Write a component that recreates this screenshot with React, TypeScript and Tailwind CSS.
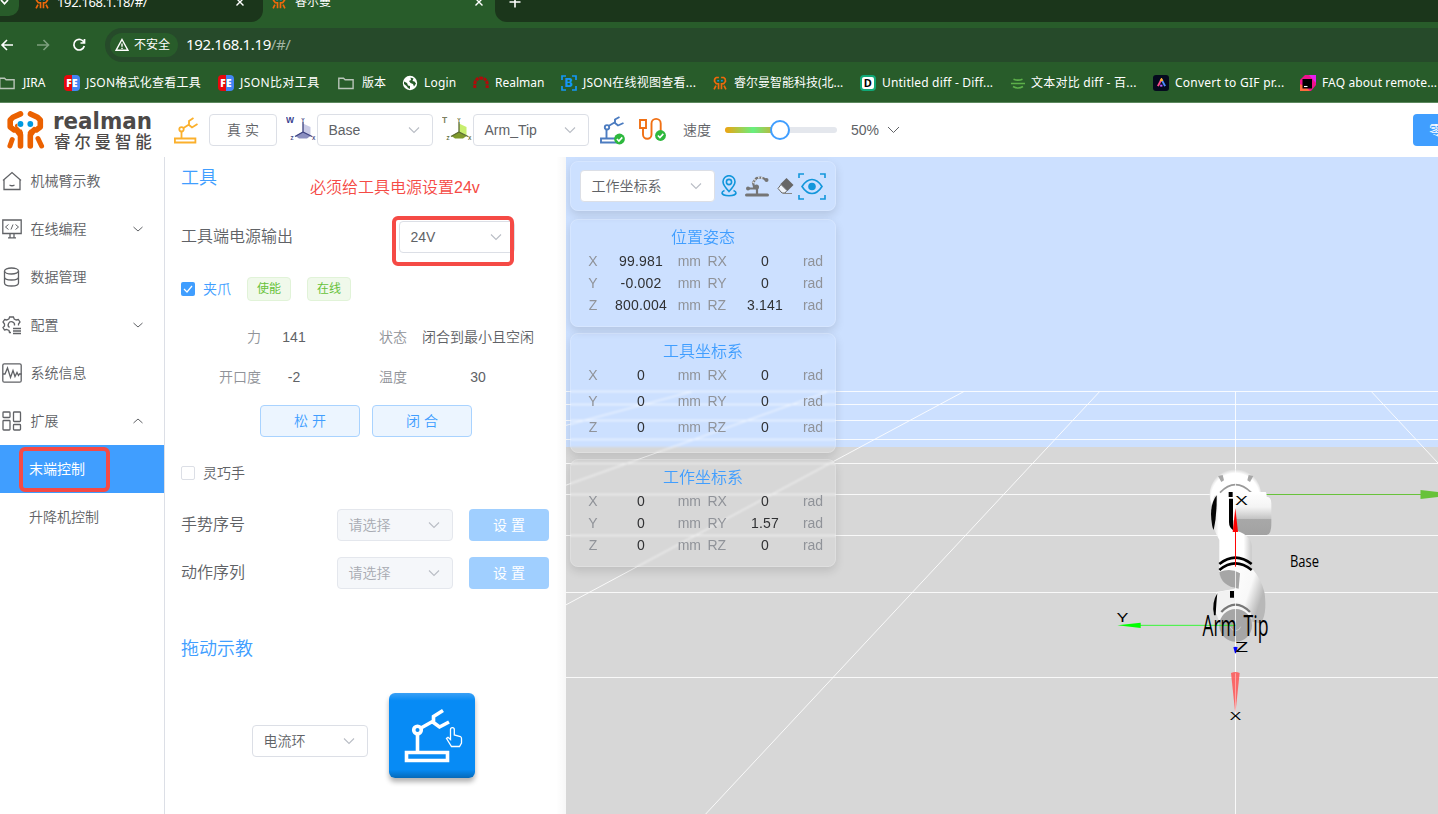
import type { ReactNode } from 'react';

function Chevron({ up = false, className = 'text-[#b9bdc5]' }: { up?: boolean; className?: string }) {
  return (
    <svg className={`h-3 w-3 shrink-0 ${className}`} viewBox="0 0 12 12" fill="none" stroke="currentColor" strokeWidth="1.100">
      <path d={up ? 'M1 8.5 6 4l5 4.5' : 'M1 3.5 6 8.5l5-5'} />
    </svg>
  );
}

function Select({ value, className = 'w-[116px]', disabled = false }: { value: string; className?: string; disabled?: boolean }) {
  return (
    <div
      className={`flex h-8 shrink-0 items-center justify-between rounded border pr-3 pl-[10.5px] text-sm ${
        disabled ? 'border-[#e4e7ed] bg-[#f5f7fa] text-[#a8abb2]' : 'border-[#dcdfe6] bg-white text-[#606266]'
      } ${className}`}
    >
      <span>{value}</span>
      <Chevron />
    </div>
  );
}

/* ---------- logo and toolbar drawings ---------- */

function MiniMark({ className = '' }: { className?: string }) {
  return (
    <svg className={`h-[14px] w-[14px] shrink-0 ${className}`} viewBox="0 0 38 38" fill="none" stroke="#f0690c" strokeWidth="4.500">
      <path d="M16 4H9Q4 6 4 14l5 7h6v15M22 4h7Q34 6 34 14l-5 7h-6v15M3 36l5-10M35 36l-5-10" />
      <path d="M11.500 13h5M21.500 13h5" stroke="#1296db" />
    </svg>
  );
}

function LogoMark() {
  return (
    <svg className="h-[38px] w-[38px] shrink-0" viewBox="0 0 38 38" fill="none" stroke="#eb6100" strokeWidth="5.600" strokeLinecap="round" strokeLinejoin="round">
      <path d="M13.500 2.900 6 6.300 3.200 9v7l4 3h2.500L13.500 24v11" />
      <path d="M23.500 2.900 30.500 6.300 33.300 9v7l-4 3h-2.500L23.300 24v11" />
      <path d="M13.500 22 10.500 15M23.300 22l3-4M5.200 28.500 2.900 35M31 27.500 34.600 35" strokeWidth="5" />
      <path d="M13.500 7.500h10l4 3v4.500l-4 3.500h-10l-3-3v-5z" fill="#fff" stroke="none" />
      <circle cx="13.500" cy="13" r="2.900" fill="#0099e0" stroke="none" />
      <circle cx="23.300" cy="13" r="2.900" fill="#0099e0" stroke="none" />
    </svg>
  );
}

function ArmIcon({ color, className }: { color: string; className: string }) {
  return (
    <svg className={className} viewBox="0 0 24 27" fill="none" stroke={color} strokeWidth="1.800">
      <path d="M.9 21.500h20.500v4H.9zM7.500 21V14M9.500 11l5.500-3.500M19.500 1 15 4v4l3 2.500L23.500 7" />
      <circle cx="7.500" cy="12.300" r="2.200" />
    </svg>
  );
}

function FrameIcon({ letter, dark, light, mid, tag }: { letter: string; dark: string; light: string; mid: string; tag: string }) {
  return (
    <svg className="h-[26px] w-[31px] shrink-0" viewBox="0 0 31 26">
      <text x="0" y="6.500" fontSize="8.500" fontWeight="700" fill={tag} fontFamily="Liberation Sans">{letter}</text>
      <path d="M17 7.500 24.500 11v9L17 16z" fill={light} />
      <path d="M17 15.500l7.500 4.500-3.500 2.500h-8L9.500 20z" fill={mid} />
      <path d="M17 6v10.500M17 16 9 20.500M17 16l9 4.500" stroke={dark} strokeWidth="1.300" fill="none" />
      <text x="15.200" y="5.500" fontSize="5" fontWeight="700" fill={dark} fontFamily="Liberation Sans">Y</text>
      <text x="4.500" y="23.500" fontSize="5" fontWeight="700" fill={dark} fontFamily="Liberation Sans">Z</text>
      <text x="26" y="23.500" fontSize="5" fontWeight="700" fill={dark} fontFamily="Liberation Sans">X</text>
    </svg>
  );
}

function OkBadge() {
  return (
    <>
      <circle r="5.400" fill="#2db83d" />
      <path d="m-2.600 0 2 2 3.400-3.600" fill="none" stroke="#fff" strokeWidth="1.600" />
    </>
  );
}

function ArmReady() {
  return (
    <svg className="h-[29px] w-[26px] shrink-0" viewBox="0 0 26 29">
      <g fill="none" stroke="#4c7cc0" strokeWidth="1.900">
        <path d="M1 22.500h16v4H1zM3.500 22.500h8M6.500 22v-8.500M8.500 10l6-3.500M19.500 1 15 3.500v3.500l3 2.500 5.500-2.500" />
        <circle cx="7" cy="11.300" r="2.200" />
      </g>
      <g transform="translate(19.500 23)"><OkBadge /></g>
    </svg>
  );
}

function CableReady() {
  return (
    <svg className="h-[26px] w-[30px] shrink-0" viewBox="0 0 30 26">
      <g fill="none" stroke="#f07014" strokeWidth="1.900">
        <path d="M2 3h6v8H2zM5 11v6.500a4.200 4.200 0 0 0 8.500 0V6.500a4.600 4.600 0 0 1 9.200 0V14" />
      </g>
      <g transform="translate(22.500 18.500)"><OkBadge /></g>
    </svg>
  );
}

/* ---------- browser chrome ---------- */

function FolderIcon() {
  return (
    <svg className="h-4 w-4" viewBox="0 0 16 16" fill="none" stroke="#b9c5b9" strokeWidth="1.400">
      <path d="M.8 13.500V3.200h4.700l1.600 1.600h8v8.700z" />
    </svg>
  );
}

function FeIcon() {
  return (
    <span className="flex h-4 w-4 items-center justify-center rounded-sm bg-[linear-gradient(90deg,#e8080c_50%,#4285f4_50%)] text-[10px] leading-none font-black text-white">
      FE
    </span>
  );
}

const bookmarks: { label: string; box: string; icon: ReactNode }[] = [
  { label: 'JIRA', box: 'w-[65px] gap-2', icon: <FolderIcon /> },
  { label: 'JSON格式化查看工具', box: 'w-[154px] gap-1.5 tracking-[0.25px]', icon: <FeIcon /> },
  { label: 'JSON比对工具', box: 'w-[120px] gap-1.5 tracking-[0.4px]', icon: <FeIcon /> },
  { label: '版本', box: 'w-[64px] gap-2', icon: <FolderIcon /> },
  {
    label: 'Login', box: 'w-[71px] gap-1.5 tracking-[0.2px]',
    icon: (
      <svg className="h-4 w-4" viewBox="0 0 16 16">
        <circle cx="8" cy="8" r="7.200" fill="#fff" />
        <path d="M2 6.500 5 8l1 2.500 2 .5v3l-2-1-1.500-2L2 9zM8.500 2.500l3 1-1 2.500 2 .5 1.500 2-2 3-1-2.500-2.500-1-1.500-2L9 5z" fill="#285c2a" />
      </svg>
    ),
  },
  {
    label: 'Realman', box: 'w-[88px] gap-1.5',
    icon: (
      <svg className="h-4 w-4" viewBox="0 0 16 16">
        <path d="M1.800 13V9Q2 3.500 8 3q6 .5 6.200 6V13" fill="none" stroke="#b00a0a" strokeWidth="3" strokeDasharray="3.200 .8" />
      </svg>
    ),
  },
  {
    label: 'JSON在线视图查看...', box: 'w-[151px] gap-1.5 tracking-[0.25px]',
    icon: (
      <svg className="h-4 w-4" viewBox="0 0 16 16" fill="none" stroke="#1497f5" strokeWidth="1.700">
        <path d="M1 5V1h4M11 1h4v4M15 11v4h-4M5 15H1v-4" />
        <text x="4" y="12.300" fontSize="12" fontWeight="800" fill="#1497f5" stroke="none" fontFamily="Inter">B</text>
      </svg>
    ),
  },
  { label: '睿尔曼智能科技(北...', box: 'w-[148px] gap-1.5', icon: <MiniMark className="ml-px h-[13px] w-[13px]" /> },
  {
    label: 'Untitled diff - Diff...', box: 'w-[150px] gap-1.5 tracking-[0.2px]',
    icon: (
      <span className="flex h-4 w-4 items-center justify-center rounded-sm border-2 border-[#10a877] bg-white text-[11px] leading-none font-bold text-black">
        D
      </span>
    ),
  },
  {
    label: '文本对比 diff - 百...', box: 'w-[143px] gap-[5px] tracking-[0.25px]',
    icon: (
      <svg className="h-4 w-4" viewBox="0 0 16 16" fill="none" stroke="#5db04a" strokeWidth="1.700">
        <path d="M3.500 4.200q4.500 2 9 0M1 8.500h14M3 11.500q5 3 10 0" />
      </svg>
    ),
  },
  {
    label: 'Convert to GIF pr...', box: 'w-[147px] gap-1.5 tracking-[0.25px]',
    icon: (
      <span className="flex h-4 w-4 items-center justify-center rounded-[3px] bg-[#050a1e]">
        <svg className="h-[9px] w-[9px]" viewBox="0 0 10 10" fill="none" strokeWidth="2.200">
          <path d="M1 9 5 1.500" stroke="#ff4d8d" />
          <path d="M5 1.500 9 9" stroke="#4c8dff" />
          <path d="M4 3.500 5 1.500l1 2" stroke="#ffb02e" />
          <path d="M3.500 8.500h2.500" stroke="#b35cff" />
        </svg>
      </span>
    ),
  },
  {
    label: 'FAQ about remote...', box: 'w-[140px] gap-1.5 tracking-[0.12px]',
    icon: (
      <svg className="h-4 w-4" viewBox="0 0 16 16">
        <path d="M5 0h11v10l-5 6H0V5z" fill="#f0128c" />
        <path d="M0 9v7h10l-4-4z" fill="#ff6a3d" />
        <path d="M9 0h7v8z" fill="#e61ef0" />
        <path d="M2.500 4H12v9.500H2.500z" />
        <path d="M4 11.500h3.500" stroke="#fff" strokeWidth="1.100" />
      </svg>
    ),
  },
];

function BrowserChrome() {
  return (
    <header className="h-[103px] shrink-0 border-b border-[#5c885e] bg-[#285c2a] font-['Noto_Sans','Noto_Sans_CJK_SC',sans-serif] font-normal text-white">
      <div className="flex h-[22px] overflow-hidden bg-[#285c2a]">
        <div className="flex w-[263px] shrink-0 rounded-br-xl bg-[#1b361b]">
          <div className="h-4 w-[19px] rounded-br-[10px] bg-[#285c2a]">
            <svg className="h-3 w-3" viewBox="0 0 12 12" fill="none" stroke="#fff" strokeWidth="1.700"><path d="m1 0 3.500 3.800L8 0" /></svg>
          </div>
          <MiniMark className="-mt-[5px] ml-[16px]" />
          <span className="-mt-[9px] ml-[8px] w-[178px] text-[13px] leading-[22px] tracking-[-0.35px]">192.168.1.18/#/</span>
          <svg className="h-3 w-2.5" viewBox="0 0 10 12" stroke="#fff" strokeWidth="1.400"><path d="M1.500-1.500 8.500 5.500M8.500-1.500 1.500 5.500" /></svg>
        </div>
        <div className="flex w-[232px] shrink-0">
          <MiniMark className="-mt-[5px] ml-[9px]" />
          <span className="-mt-[9px] ml-[9px] w-[179px] text-[12px] leading-[22px]">睿尔曼</span>
          <svg className="h-3 w-2.5" viewBox="0 0 10 12" stroke="#fff" strokeWidth="1.400"><path d="M1.500-1.500 8.500 5.500M8.500-1.500 1.500 5.500" /></svg>
        </div>
        <div className="flex-1 rounded-bl-xl bg-[#1b361b] pl-[14px]">
          <svg className="-mt-1 h-3 w-3" viewBox="0 0 12 12" stroke="#fff" strokeWidth="1.600"><path d="M.5 6h11M6 .5v11" /></svg>
        </div>
      </div>
      <div className="flex h-[46px] items-center">
        <svg className="h-4 w-4 shrink-0" viewBox="0 0 16 16" fill="none" stroke="#fff" strokeWidth="1.600"><path d="M13 8H2M7 3 2 8l5 5" /></svg>
        <svg className="ml-5 h-4 w-4 shrink-0" viewBox="0 0 16 16" fill="none" stroke="#7d9f7e" strokeWidth="1.600"><path d="M1 8h11M7.500 3l5 5-5 5" /></svg>
        <svg className="ml-[19px] h-4 w-4 shrink-0" viewBox="0 0 16 16" fill="none" stroke="#fff" strokeWidth="1.700">
          <path d="M13 5.500A5.300 5.300 0 1 0 13.300 9M13.500 2v4h-4" />
        </svg>
        <div className="ml-[18px] flex h-[34px] flex-1 items-center rounded-l-[17px] bg-[#264a2a] pl-[5px]">
          <div className="flex h-6 w-[68px] items-center rounded-full bg-[#285c2a] pl-[5px]">
            <svg className="h-[14px] w-[14px]" viewBox="0 0 14 14" fill="none" stroke="#fff" strokeWidth="1.400"><path d="M7 1.500 13 12.300H1zM7 5.500v3.300M7 9.800v1.200" /></svg>
            <span className="ml-[5px] text-[12px] leading-none whitespace-nowrap">不安全</span>
          </div>
          <span className="-mt-0.5 ml-2 text-[15px] tracking-[-0.37px]">192.168.1.19<span className="text-[#a3b5a4]">/#/</span></span>
        </div>
      </div>
      <nav className="-ml-px flex h-[29px] items-center text-[12px] whitespace-nowrap">
        {bookmarks.map((b) => (
          <div key={b.label} className={`flex shrink-0 items-center ${b.box}`}>
            <span className="flex h-4 w-4 shrink-0 items-center">{b.icon}</span>
            <span>{b.label}</span>
          </div>
        ))}
      </nav>
    </header>
  );
}

/* ---------- app header ---------- */

function AppHeader() {
  return (
    <div className="flex h-[54px] shrink-0 items-center overflow-hidden bg-white pl-[7px]">
      <LogoMark />
      <svg className="ml-[9px] h-[42px] w-[99px] shrink-0" viewBox="0 0 99 42" fill="#4c4948" fontWeight="700">
        <text x="-1" y="19.500" fontSize="22.500" textLength="99" lengthAdjust="spacingAndGlyphs" fontFamily="DejaVu Sans">realman</text>
        <text x="0" y="39" fontSize="16.500" fontWeight="500" letterSpacing="3.800" fontFamily="Noto Sans CJK SC">睿尔曼智能</text>
      </svg>
      <ArmIcon color="#fbb02c" className="ml-[21px] h-[27px] w-6 shrink-0" />
      <div className="ml-[11px] flex h-8 w-[68px] shrink-0 items-center justify-center rounded border border-[#dcdfe6] text-sm">真 实</div>
      <div className="-mt-0.5 ml-[9px] flex items-center"><FrameIcon letter="W" dark="#3d4380" light="#c9cbe6" mid="#8b8fc0" tag="#3b3f8f" /></div>
      <Select value="Base" />
      <div className="-mt-0.5 ml-[9px] flex items-center"><FrameIcon letter="T" dark="#5c6b35" light="#c8ee6e" mid="#7f9a2a" tag="#7d8060" /></div>
      <Select value="Arm_Tip" />
      <div className="ml-[11px]"><ArmReady /></div>
      <div className="ml-[12px]"><CableReady /></div>
      <span className="ml-[15px] text-sm">速度</span>
      <div className="relative ml-[14px] h-1.5 w-[112px] shrink-0 rounded-full bg-[#e4e7ed]">
        <div className="h-1.5 w-[56px] rounded-full bg-[linear-gradient(90deg,#f0a30f,#67ef80_50%,#e0a020)]" />
        <div className="absolute -top-[7px] left-[45px] h-5 w-5 rounded-full border-2 border-[#409eff] bg-white" />
      </div>
      <span className="ml-[14px] text-sm">50%</span>
      <svg className="ml-2 h-3 w-[13px]" viewBox="0 0 13 12" fill="none" stroke="#606266"><path d="m1 3 5.500 5.500L12 3" /></svg>
      <div className="ml-auto flex h-8 w-[25px] shrink-0 items-center overflow-hidden rounded-l bg-[#409eff] pl-4 text-sm whitespace-nowrap text-white">零位</div>
    </div>
  );
}

/* ---------- sidebar ---------- */

const menu: { label: string; icon: ReactNode; arrow?: 'up' | 'down' }[] = [
  { label: '机械臂示教', icon: <path d="M1 9.500 10 1.500l9 8M2 8.800V18.500h16V8.800M7.500 14q2.500 1.500 5 0" /> },
  {
    label: '在线编程', arrow: 'down',
    icon: <><path d="M.8 1h18.400v13.500H.8zM8 14.500v4M12 14.500v4M6 18.800h8" /><path d="M6.500 5.500 3.500 8l3 2.500M13.500 5.500l3 2.500-3 2.500M11 5.500l-2 5" strokeWidth="1" /></>,
  },
  { label: '数据管理', icon: <><ellipse cx="9.500" cy="4" rx="7" ry="3" /><path d="M2.500 4v12c0 4 14 4 14 0V4M2.500 10c0 4 14 4 14 0" /></> },
  {
    label: '配置', arrow: 'down',
    icon: (
      <>
        <path d="M9 17.500H7.500L7 15.500 4.500 14.500l-2 .5L1 12.500l1.500-1.500v-2L1 7l1.700-2.500 2 .5L7 3.800 7.600 2h3.800l.8 2 2 1 2.100-.5L18 7l-1.500 2v1.500" />
        <path d="M12.500 10.500a3.200 3.200 0 1 0-5 2M11 13.500h8M11 16h8M11 18.500h8" />
      </>
    ),
  },
  { label: '系统信息', icon: <><rect x=".8" y=".8" width="18.400" height="18.400" rx="1.500" /><path d="M1 11h2l2.500-6 3 9.500 2.500-7 2 6 2-4 1.500 3 1-1.500h2" /></> },
  {
    label: '扩展', arrow: 'up',
    icon: <><rect x="1" y="1" width="7" height="5.500" rx=".8" /><rect x="1" y="9.500" width="7" height="9.500" rx=".8" /><rect x="11.500" y="1" width="7" height="9.500" rx=".8" /><rect x="11.500" y="13.500" width="7" height="5.500" rx=".8" /></>,
  },
];

function Sidebar() {
  return (
    <aside className="w-[165px] shrink-0 border-r border-[#dcdfe6] bg-white text-sm">
      {menu.map((m) => (
        <div key={m.label} className="flex h-12 items-center pl-0.5">
          <svg className="h-5 w-5 shrink-0" viewBox="0 0 20 20" fill="none" stroke="#606266" strokeWidth="1.300">{m.icon}</svg>
          <span className="ml-[8.5px] flex-1">{m.label}</span>
          {m.arrow && (
            <svg className="mr-[20px] h-3 w-3" viewBox="0 0 12 12" fill="none" stroke="#606266">
              <path d={m.arrow === 'up' ? 'M1.500 8 6 4l4.500 4' : 'm1.500 4 4.500 4 4.500-4'} />
            </svg>
          )}
        </div>
      ))}
      <div className="relative flex h-12 items-center bg-[#409eff] pl-[29px] font-normal text-white">
        末端控制
        <div className="absolute top-[2px] left-[19px] h-[45px] w-[91px] rounded-md border-4 border-[#f54a45]" />
      </div>
      <div className="flex h-12 items-center pl-[29px]">升降机控制</div>
    </aside>
  );
}

/* ---------- tool panel ---------- */

function Tag({ children }: { children: ReactNode }) {
  return <span className="flex h-6 w-11 items-center justify-center rounded border border-[#e1f3d8] bg-[#f0f9eb] text-xs font-normal text-[#67c23a]">{children}</span>;
}

function DisabledRow({ label }: { label: string }) {
  return (
    <div className="flex h-8 items-center">
      <span className="w-[156px] text-base">{label}</span>
      <Select value="请选择" disabled />
      <div className="ml-4 flex h-8 w-20 items-center justify-center rounded bg-[#a0cfff] text-sm font-normal text-white">设 置</div>
    </div>
  );
}

function ToolPanel() {
  return (
    <section className="flex w-[401px] shrink-0 flex-col bg-white bg-[linear-gradient(90deg,transparent_97.5%,rgba(0,0,0,0.03))] pl-4">
      <div className="flex h-[63px] items-start">
        <h2 className="mt-2 text-lg leading-[26px] text-[#409eff]">工具</h2>
        <p className="mt-[19px] ml-[93px] text-base leading-6 text-[#f54a45]">必须给工具电源设置24v</p>
      </div>
      <div className="relative mt-px flex h-8 items-center">
        <span className="w-[218px] text-base">工具端电源输出</span>
        <Select value="24V" />
        <div className="absolute -top-[5px] left-[211px] h-[50px] w-[122px] rounded-md border-4 border-[#f54a45]" />
      </div>
      <div className="mt-6 flex h-6 items-center text-sm">
        <span className="flex h-3.5 w-3.5 items-center justify-center rounded-[2px] bg-[#409eff]">
          <svg className="h-2.5 w-2.5" viewBox="0 0 10 10" fill="none" stroke="#fff" strokeWidth="1.200"><path d="m1 5 3 3 5-6" /></svg>
        </span>
        <span className="mr-4 ml-2 text-[#409eff]">夹爪</span>
        <Tag>使能</Tag>
        <span className="w-4" />
        <Tag>在线</Tag>
      </div>
      <div className="mt-4 grid w-[370px] grid-cols-[80px_66px_80px_142px] text-sm leading-10">
        <span className="text-right text-[#909399]">力</span>
        <span className="text-center">141</span>
        <span className="text-right text-[#909399]">状态</span>
        <span className="text-center">闭合到最小且空闲</span>
        <span className="text-right text-[#909399]">开口度</span>
        <span className="text-center">-2</span>
        <span className="text-right text-[#909399]">温度</span>
        <span className="text-center">30</span>
      </div>
      <div className="mt-2 ml-[79px] flex gap-3 text-sm text-[#409eff]">
        <span className="flex h-8 w-[100px] items-center justify-center rounded border border-[#a9d3ff] bg-[#ecf5ff]">松 开</span>
        <span className="flex h-8 w-[100px] items-center justify-center rounded border border-[#a9d3ff] bg-[#ecf5ff]">闭 合</span>
      </div>
      <div className="mt-6 flex h-6 items-center text-sm">
        <span className="h-3.5 w-3.5 rounded-[2px] border border-[#dcdfe6]" />
        <span className="ml-2">灵巧手</span>
      </div>
      <div className="mt-6 flex flex-col gap-4">
        <DisabledRow label="手势序号" />
        <DisabledRow label="动作序列" />
      </div>
      <h2 className="mt-[47px] text-lg leading-[26px] text-[#409eff]">拖动示教</h2>
      <div className="mt-[31px] ml-[71px] flex items-start">
        <div className="mt-8"><Select value="电流环" /></div>
        <div className="ml-[21px] h-[85px] w-[86px] rounded-md bg-[linear-gradient(#3ba0f5,#078bf5_9%,#078bf5_90%,#0569b8)] shadow-[0_4px_5px_rgba(0,0,0,0.3)]">
          <svg className="h-[86px] w-[86px]" viewBox="0 0 86 86" fill="none" stroke="#fff" strokeWidth="3.600">
            <path d="M17.500 59.500h41v8h-41zM28.500 58V42M32 35l11.500-6.500M54 17.500l-9.500 6V29.500L50.500 34 60 29" />
            <circle cx="28.500" cy="37" r="3.800" />
            <path d="M61.500 46.500v-10a1.900 1.900 0 0 1 3.800 0v5.500l6 1.500q1.200.5 1.200 2v4.500l-2 3.500h-8l-5-8 1.500-1.200z" strokeWidth="1.300" />
          </svg>
        </div>
      </div>
    </section>
  );
}

/* ---------- 3D viewport ---------- */

const gridRows = [391.5, 404.5, 420.5, 439.5, 463.5, 494.5, 535.5, 592.5, 677.5];
const gridFans = [-4, -3, -2, -1, 0, 1];

function Scene() {
  return (
    <svg className="absolute inset-0 h-[657px] w-[872px]" viewBox="566 157 872 657">
      <defs>
        <linearGradient id="barrel" x1="0" y1="0" x2="0" y2="1">
          <stop offset="0" stopColor="#fff" /><stop offset=".35" stopColor="#f4f4f4" /><stop offset=".62" stopColor="#c4c4c4" /><stop offset=".64" stopColor="#a8a8a8" /><stop offset="1" stopColor="#a2a2a2" />
        </linearGradient>
        <linearGradient id="tube" x1="0" y1="0" x2="1" y2="0">
          <stop offset="0" stopColor="#d0d0d0" /><stop offset=".18" stopColor="#fff" /><stop offset=".8" stopColor="#fff" /><stop offset="1" stopColor="#c8c8c8" />
        </linearGradient>
        <linearGradient id="elbow" x1="0" y1="0" x2="1" y2=".4">
          <stop offset=".3" stopColor="#fff" /><stop offset=".75" stopColor="#f8f8f8" /><stop offset="1" stopColor="#b8b8b8" />
        </linearGradient>
        <radialGradient id="dome" cx=".5" cy=".55" r=".55">
          <stop offset=".85" stopColor="#fff" /><stop offset="1" stopColor="#d5d5d5" />
        </radialGradient>
      </defs>
      <rect x="566" y="157" width="872" height="291" fill="#cce0ff" />
      <rect x="566" y="447" width="872" height="367" fill="#d7d7d7" />
      <g stroke="#fff" strokeOpacity=".85">
        {gridRows.map((y) => <path key={y} d={`M566 ${y}H1438`} />)}
        {gridFans.map((k) => <path key={k} d={`M${1235.5 + k * 135.8} 391.5L${1235.5 + k * 529.8} 814`} />)}
      </g>
      <path d="M1266 494.5h156" stroke="#67c23a" />
      <path d="M1420.500 490v9l17.500-2v-5z" fill="#67c23a" />
      <g transform="translate(1090 440) scale(.33333)">
        <circle cx="436" cy="164" r="77" fill="url(#dome)" />
        <path d="M384 108l14-3 4 16-8 5z" fill="#a8a8a8" /><path d="M490 108l-14-3-4 16 8 5z" fill="#a8a8a8" />
        <path d="M390 158q46-48 94 0" fill="none" stroke="#999" strokeWidth="5" />
        <path d="M432 156h94q4 0 4 14 14 0 14 20v60q0 35-14 35h-92z" fill="url(#barrel)" />
        <path d="M372 168q18-8 54-8v108q60 16 59 52v72q-48-30-97 0v-92q-20-34-24-70z" fill="url(#tube)" />
        <path d="M380 166q-16 20-17 56 2 40 8 48 10-44 9-104z" fill="#050505" />
        <path d="M416 156h12v15h-12zM417 176h12v94q-12-8-12-24z" fill="#000" />
        <path d="M388 384q48-34 97 0 30 34 39 76 8 70-14 90l-140-30 10-64 56-10-38-26q-12-20-10-36z" fill="url(#elbow)" />
        <path d="M388 396q34-14 62 4l-4 46q-54-8-58-50z" fill="#a6a6a6" />
        <path d="M388 372q48-38 97 0M388 390q48-40 97 0" fill="none" stroke="#000" strokeWidth="8" />
        <path d="M382 458q20-8 56-8v70l-50 26q-22-50-6-88z" fill="#f2f2f2" />
        <path d="M382 460q-18 28-10 66h5q2-40 5-66zM420 453h12v20h-12z" fill="#000" />
        <path d="M388 535q4-40 48-52 44 12 50 52z" fill="#f6f6f6" />
        <path d="M394 516q42-44 86 0" fill="none" stroke="#777" strokeWidth="7" />
        <circle cx="437" cy="556" r="49" fill="#a6a6a6" />
        <path d="M420 560q4 12 18 12 12-2 14-12" fill="none" stroke="#ddd" strokeWidth="2" />
        <path d="M436.500 0v900" stroke="#fff" strokeWidth="3" strokeOpacity=".75" />
        <path d="M436.500 270v110" stroke="#f00" strokeWidth="3" /><path d="M436 204l8 72h-16z" fill="#f00" />
        <path d="M150 556h286" stroke="#0f0" strokeWidth="3" strokeOpacity=".75" /><path d="M82 556l70-8v16z" fill="#0f0" />
        <path d="M430 622q6-3 13 0l-5 18h-3z" fill="#00f" />
        <path d="M423 699q13-6 26 0l-13 122z" fill="#f55" fillOpacity=".85" />
        <path d="M436.500 700v125" stroke="#fff" strokeWidth="2" strokeOpacity=".6" />
      </g>
      <g fontFamily="Open Sans" fontWeight="400" fill="#000">
        <text x="1290" y="567" fontSize="16.500" textLength="29" lengthAdjust="spacingAndGlyphs">Base</text>
        <text x="1202.500" y="635.500" fontSize="29" textLength="34" lengthAdjust="spacingAndGlyphs">Arm</text>
        <text x="1243.500" y="635.500" fontSize="29" textLength="25" lengthAdjust="spacingAndGlyphs">Tip</text>
        <text x="1235.500" y="505" fontSize="12" textLength="12" lengthAdjust="spacingAndGlyphs">X</text>
        <text x="1117" y="622.300" fontSize="12" textLength="11" lengthAdjust="spacingAndGlyphs">Y</text>
        <text x="1235.300" y="652" fontSize="14" textLength="13" lengthAdjust="spacingAndGlyphs">Z</text>
        <text x="1230" y="719.500" fontSize="11" textLength="11" lengthAdjust="spacingAndGlyphs">X</text>
      </g>
    </svg>
  );
}

function Card({ className, children }: { className: string; children: ReactNode }) {
  return (
    <div className={`w-[266px] rounded-lg border border-white/20 shadow-[0_4px_10px_rgba(0,0,0,0.12)] backdrop-blur-[1px] ${className}`}>
      {children}
    </div>
  );
}

function Pose({ title, rows, card, line, head }: { title: string; rows: string[][]; card: string; line: string; head: string }) {
  return (
    <Card className={card}>
      <h3 className={`pt-[7px] text-center text-base leading-[22px] text-[#409eff] ${head}`}>{title}</h3>
      {rows.map(([a, v, b, w]) => (
        <div key={a} className={`grid grid-cols-[44px_52px_34px_33px_62px_34px] text-sm text-[#909399] ${line}`}>
          <span className="text-center">{a}</span>
          <span className="text-center tracking-[0.2px] text-[#303133]">{v}</span>
          <span className="text-right">mm</span>
          <span className="pl-[6.5px]">{b}</span>
          <span className="text-center tracking-[0.2px] text-[#303133]">{w}</span>
          <span className="text-center">rad</span>
        </div>
      ))}
    </Card>
  );
}

function Viewport() {
  return (
    <main className="relative h-[657px] w-[872px] overflow-hidden">
      <Scene />
      <div className="absolute top-1 left-1 flex flex-col">
        <Card className="flex h-[50px] items-center pl-[9px]">
          <Select value="工作坐标系" className="w-[135px]" />
          <svg className="ml-[6px] h-[22px] w-4" viewBox="0 0 16 22" fill="none" stroke="#1296db" strokeWidth="1.600">
            <path d="M8 16.500Q2 10 2 6.700a6 6 0 0 1 12 0Q14 10 8 16.500z" /><circle cx="8" cy="7" r="2.600" /><path d="M3.500 15.500Q1 16.500 1 18q.5 2.500 7 2.800 6.500-.3 7-2.800 0-1.500-2.500-2.500" />
          </svg>
          <svg className="ml-[7px] h-[22px] w-[26px]" viewBox="0 0 26 22" fill="none" stroke="#757575">
            <path d="M2.500 20h21" strokeWidth="3" strokeLinecap="round" /><path d="M13 19v-7M3.500 13.500h7L9 7.500l4-5M13 3q6-1.500 9 2" strokeWidth="2.200" />
            <path d="M9 8l3-5M14 2.500l5 .5" stroke="#ddd" strokeWidth="2" strokeDasharray="1.500 1.500" />
            <circle cx="4" cy="13.500" r="2" fill="#757575" stroke="none" /><circle cx="22.500" cy="5" r="2" fill="#757575" stroke="none" /><circle cx="12.500" cy="12" r="2.500" fill="#757575" stroke="none" />
          </svg>
          <svg className="ml-[7px] h-[18px] w-[17px]" viewBox="0 0 17 18">
            <path d="m9.500 1 7 7-6 6-7-7z" fill="#666" /><path d="m4 7.500 6 6-2 2.500H5L1 11.500z" fill="#eef3fa" stroke="#666" /><path d="M6 16.500h9" stroke="#888" />
          </svg>
          <svg className="ml-[4px] h-[27px] w-7" viewBox="0 0 28 27" fill="none" stroke="#1296db" strokeWidth="1.600">
            <path d="M1 5V1h5M22 1h5v4M27 22v4h-5M6 26H1v-4M4 13.500q4.500-7 10-7t10 7q-4.500 7-10 7t-10-7z" /><circle cx="14" cy="13.500" r="3.800" fill="#1296db" stroke="none" />
          </svg>
        </Card>
        <Pose title="位置姿态" card="mt-2 h-[108px]" head="mb-px" line="leading-[22px]" rows={[['X', '99.981', 'RX', '0'], ['Y', '-0.002', 'RY', '0'], ['Z', '800.004', 'RZ', '3.141']]} />
        <Pose title="工具坐标系" card="mt-1.5 h-[120px]" head="-mb-px" line="leading-[26px]" rows={[['X', '0', 'RX', '0'], ['Y', '0', 'RY', '0'], ['Z', '0', 'RZ', '0']]} />
        <Pose title="工作坐标系" card="mt-1.5 h-[108px]" head="mb-px" line="leading-[22px]" rows={[['X', '0', 'RX', '0'], ['Y', '0', 'RY', '1.57'], ['Z', '0', 'RZ', '0']]} />
      </div>
    </main>
  );
}

export default function App() {
  return (
    <div className="flex h-[814px] w-[1438px] flex-col overflow-hidden bg-white font-['Liberation_Sans','Noto_Sans_CJK_SC',sans-serif] font-[350] text-[#606266]">
      <BrowserChrome />
      <AppHeader />
      <div className="flex flex-1">
        <Sidebar />
        <ToolPanel />
        <Viewport />
      </div>
    </div>
  );
}
